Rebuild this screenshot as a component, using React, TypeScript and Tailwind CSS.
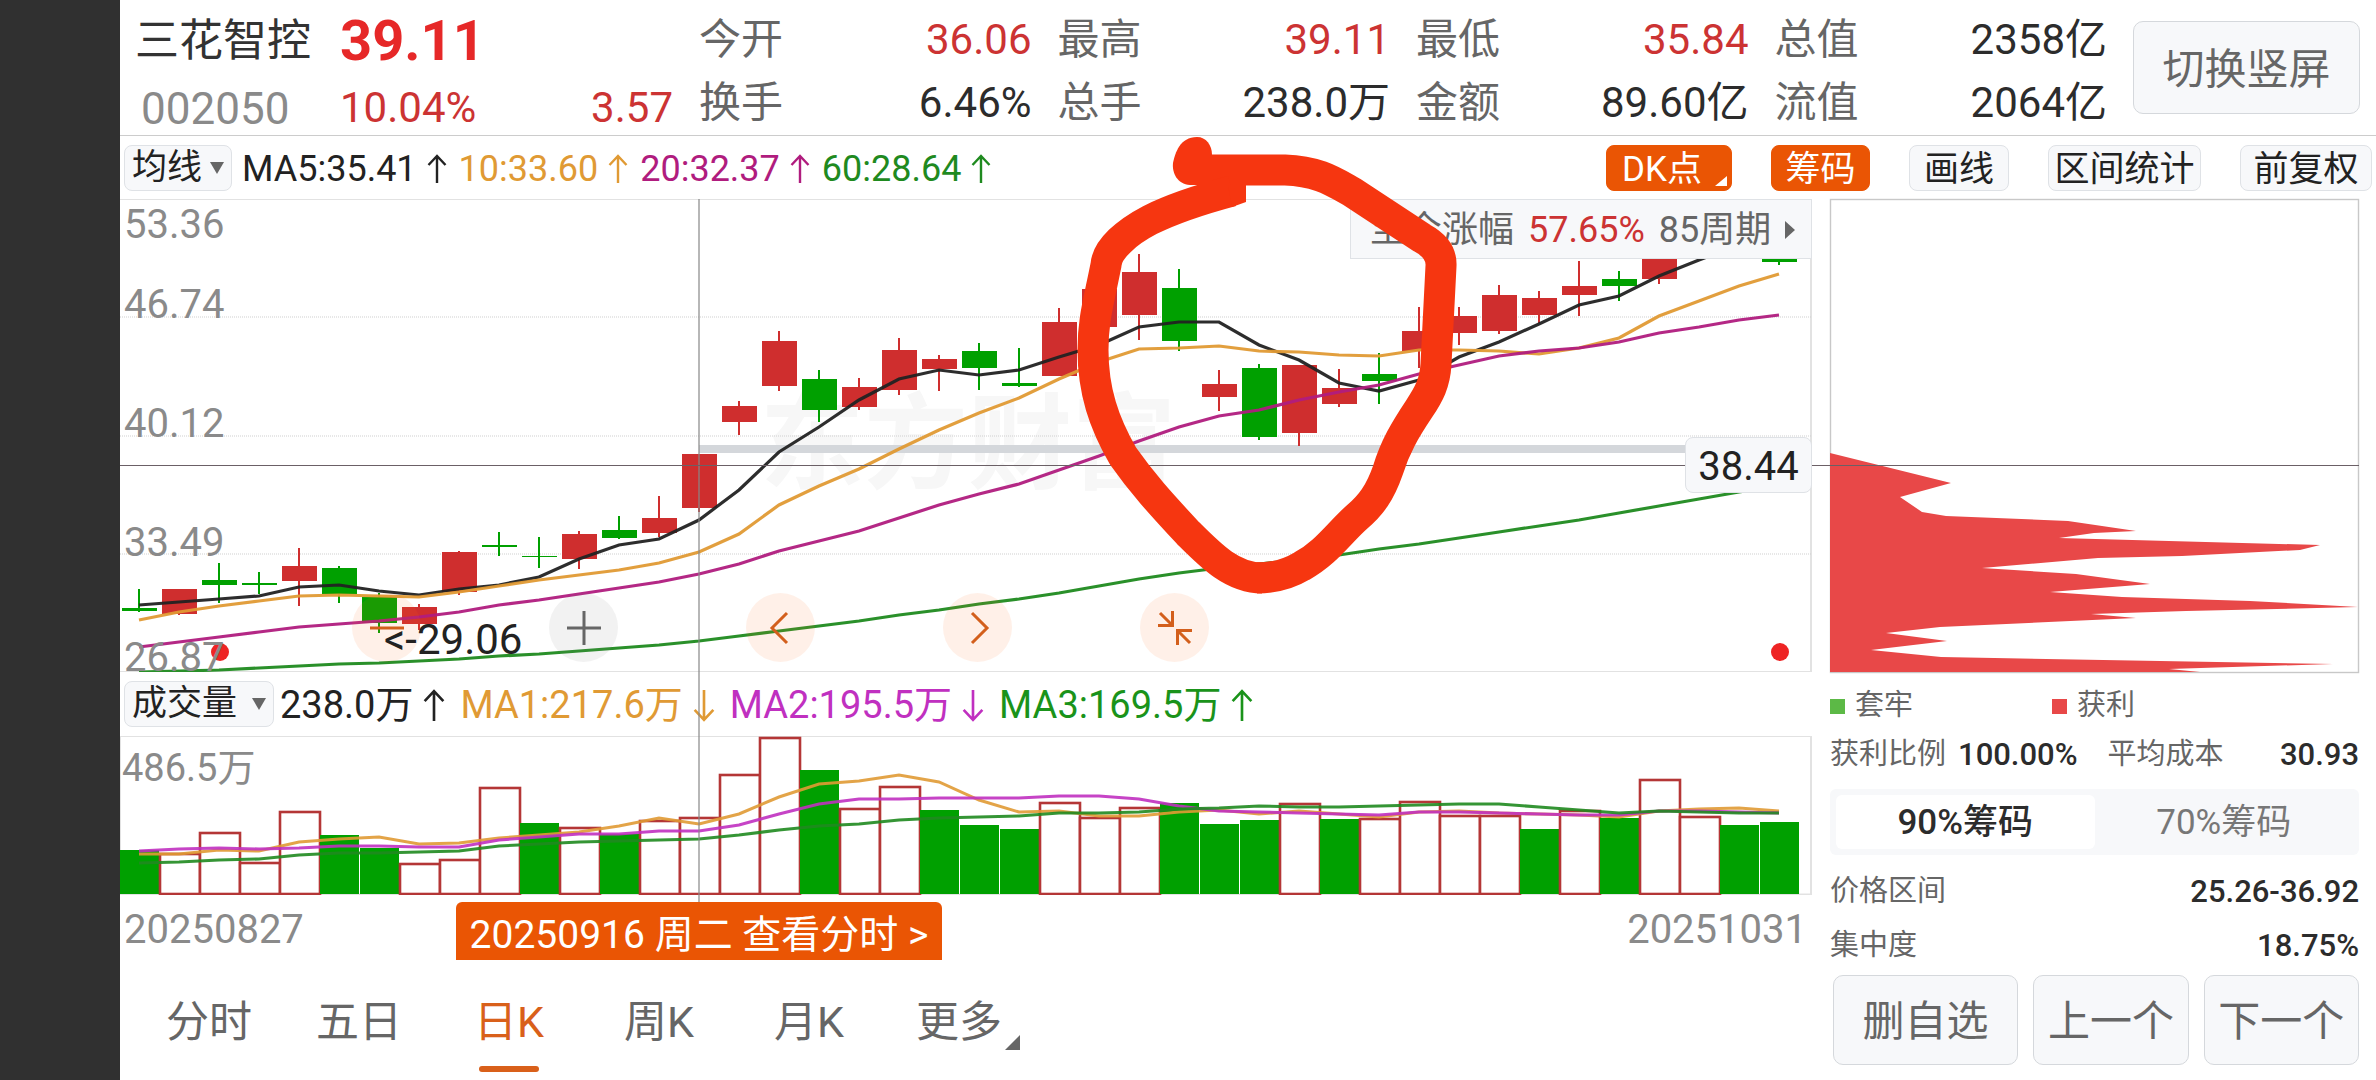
import { useState } from "react";
import type { ReactNode } from "react";
import clsx from "clsx";

const STEP = 40;
const RED = "#cf2e2e";
const GREEN = "#00a000";

type Candle = [up: boolean, top: number, bottom: number, high: number, low: number];

const candles: Candle[] = [
  [false, 409, 412, 390, 413],
  [true, 390, 415, 390, 416],
  [false, 381, 386, 364, 404],
  [false, 384, 386, 373, 395],
  [true, 367, 382, 349, 407],
  [false, 369, 395, 367, 404],
  [false, 398, 424, 394, 434],
  [true, 408, 425, 405, 431],
  [true, 353, 393, 352, 396],
  [false, 346, 348, 333, 357],
  [false, 357, 358, 338, 369],
  [true, 335, 360, 332, 370],
  [false, 331, 339, 317, 340],
  [true, 319, 334, 297, 338],
  [true, 255, 309, 255, 313],
  [true, 207, 223, 202, 236],
  [true, 142, 187, 132, 192],
  [false, 180, 211, 171, 223],
  [true, 188, 208, 179, 211],
  [true, 151, 191, 139, 196],
  [true, 160, 170, 156, 192],
  [false, 152, 169, 144, 191],
  [false, 184, 187, 149, 188],
  [true, 123, 177, 109, 177],
  [true, 90, 128, 90, 128],
  [true, 73, 116, 55, 141],
  [false, 89, 142, 70, 152],
  [true, 185, 198, 171, 212],
  [false, 169, 238, 165, 241],
  [true, 166, 234, 166, 247],
  [true, 189, 205, 170, 208],
  [false, 175, 182, 154, 205],
  [true, 132, 152, 108, 169],
  [true, 117, 134, 108, 146],
  [true, 96, 132, 86, 135],
  [true, 99, 116, 92, 124],
  [true, 87, 96, 62, 117],
  [false, 80, 87, 72, 102],
  [true, 40, 80, 30, 85],
  [true, 20, 40, 15, 45],
  [false, 22, 44, 18, 50],
  [false, 50, 63, 40, 66],
];

const priceLines = [
  {
    color: "#222222",
    values: [
      406, 403, 400, 397, 388, 386, 392, 396, 390, 386, 378, 360, 346, 340, 321, 291, 253, 228,
      201, 180, 171, 176, 171, 158, 146, 128, 123, 123, 146, 161, 184, 192, 181, 158, 143, 125,
      106, 97, 77, 61, 46, 36,
    ],
  },
  {
    color: "#e09a34",
    values: [
      421, 413, 407, 402, 397, 396, 397, 398, 393, 387, 381, 376, 371, 364, 353, 335, 306, 287,
      270, 250, 231, 214, 199, 180, 163, 150, 149, 147, 152, 153, 156, 157, 151, 151, 152, 155,
      149, 139, 117, 102, 87, 75,
    ],
  },
  {
    color: "#b01c7e",
    values: [
      448, 443, 438, 433, 428, 425, 422, 418, 413, 406, 401, 395, 389, 383, 375, 365, 352, 342,
      332, 319, 306, 295, 285, 271, 257, 242, 228, 217, 211, 201, 193, 186, 175, 166, 157, 152,
      149, 143, 134, 128, 121, 116,
    ],
  },
  {
    color: "#1f8a1f",
    values: [
      473, 472, 471, 469, 467, 465, 464, 462, 460, 457, 455, 452, 449, 446, 442, 437, 432, 427,
      422, 416, 411, 405, 400, 394, 387, 380, 374, 369, 365, 361, 356, 350, 345, 339, 333, 327,
      321, 314, 307, 300, 293, 287,
    ],
  },
];

// [rising, top edge of the bar]
const volumes: [boolean, number][] = [
  [false, 114], [true, 117], [true, 96], [true, 126], [true, 75], [false, 99], [false, 112],
  [true, 127], [true, 123], [true, 51], [false, 87], [true, 91], [false, 98], [true, 84],
  [true, 81], [true, 38], [true, 1], [false, 34], [true, 72], [true, 50], [false, 74],
  [false, 89], [false, 93], [true, 66], [true, 81], [true, 71], [false, 67], [false, 88],
  [false, 84], [true, 67], [false, 83], [true, 82], [true, 65], [true, 79], [true, 79],
  [false, 93], [true, 74], [false, 82], [true, 43], [true, 80], [false, 89], [false, 86],
];

const volumeLines = [
  {
    color: "#e09a34",
    values: [
      118, 118, 114, 115, 106, 103, 101, 108, 107, 102, 99, 96, 90, 82, 88, 78, 61, 48, 45, 39,
      46, 64, 76, 75, 80, 80, 76, 74, 78, 75, 78, 81, 76, 75, 77, 78, 79, 81, 75, 73, 72, 75,
    ],
  },
  {
    color: "#c030c0",
    values: [
      115, 113, 112, 113, 112, 110, 110, 111, 111, 104, 101, 98, 98, 95, 95, 89, 78, 68, 63, 63,
      62, 62, 62, 60, 60, 63, 70, 75, 76, 77, 78, 79, 76, 76, 77, 78, 79, 79, 75, 75, 76, 77,
    ],
  },
  {
    color: "#1f8a1f",
    values: [
      127, 126, 124, 123, 119, 117, 117, 116, 115, 110, 108, 106, 105, 104, 103, 99, 94, 90, 88,
      84, 82, 81, 80, 77, 77, 76, 73, 72, 70, 71, 71, 70, 69, 68, 68, 71, 74, 77, 75, 76, 77, 77,
    ],
  },
];

const chips =
  "0,254 121,284 70,298 92,313 116,317 238,322 306,332 264,334 229,339 490,346 470,351 352,357 268,359 152,369 246,375 320,385 220,393 292,398 420,402 528,408 356,412 261,415 306,419 110,428 56,434 117,442 41,451 111,458 503,465 339,470 370,473 0,473";

const stats = [
  [["今开", "36.06", true], ["换手", "6.46%", false]],
  [["最高", "39.11", true], ["总手", "238.0万", false]],
  [["最低", "35.84", true], ["金额", "89.60亿", false]],
  [["总值", "2358亿", false], ["流值", "2064亿", false]],
] as const;

const periods = ["分时", "五日", "日K", "周K", "月K", "更多"];

function points(values: number[], offset: number) {
  return values.map((y, i) => `${offset + i * STEP},${y}`).join(" ");
}

function Arrow({ down = false, large = false }: { down?: boolean; large?: boolean }) {
  return (
    <svg
      viewBox="0 0 20 30"
      className={clsx(large ? "h-[33px] w-[22px]" : "h-[30px] w-[20px]", down && "rotate-180")}
      fill="none"
      stroke="currentColor"
      strokeWidth="2.4"
      aria-hidden="true"
    >
      <path d="M10 29V2M1.500 11 10 2l8.500 9" />
    </svg>
  );
}

function Reading({
  className,
  children,
  down,
  large,
}: {
  className: string;
  children: ReactNode;
  down?: boolean;
  large?: boolean;
}) {
  return (
    <span className={clsx("flex items-center gap-[10px] whitespace-nowrap", className)}>
      {children}
      <Arrow down={down} large={large} />
    </span>
  );
}

function Picker({ label, options, className }: { label: string; options: string[]; className: string }) {
  return (
    <span className={clsx("relative flex h-[46px] shrink-0", className)}>
      <select
        aria-label={label}
        className="w-full appearance-none rounded-lg border border-[#dfe2e6] bg-[#f7f8fa] pl-[7px] text-[35px] leading-[44px] text-[#222]"
      >
        {options.map((option) => (
          <option key={option}>{option}</option>
        ))}
      </select>
      <svg
        viewBox="0 0 14 12"
        className="pointer-events-none absolute top-[17px] right-2 h-3 w-3.5"
        fill="#666"
        aria-hidden="true"
      >
        <path d="M0 0h14L7 12z" />
      </svg>
    </span>
  );
}

function ToolButton({
  active = false,
  className,
  children,
}: {
  active?: boolean;
  className: string;
  children: ReactNode;
}) {
  return (
    <button
      type="button"
      className={clsx(
        "relative h-[46px] shrink-0 rounded-lg border pt-0.5 text-[35px] leading-[44px]",
        active
          ? "border-[#ea5504] bg-[#ea5504] text-white"
          : "border-[#dfe2e6] bg-[#f7f8fa] text-[#222]",
        className,
      )}
    >
      {children}
    </button>
  );
}

function Header() {
  return (
    <header className="flex h-[136px] border-b border-[#ccc]">
      <div className="w-[204px] shrink-0 pt-2 pl-[15px]">
        <h1 className="text-[44px] leading-[66px] text-[#333]">三花智控</h1>
        <p className="pl-1.5 text-[44px] leading-[70px] text-[#8a8a8a]">002050</p>
      </div>
      <div className="w-[375px] shrink-0 pt-2 pr-[26px] pl-4">
        <p className="text-[56px] leading-[66px] font-bold text-[#e62828]">39.11</p>
        <p className="flex justify-between text-[42px] leading-[68px] text-[#cc3333]">
          <span>10.04%</span>
          <span>3.57</span>
        </p>
      </div>
      <div className="grid flex-1 grid-cols-4 pt-2">
        {stats.map((column) => (
          <dl key={column[0][0]} className="pr-[26px] text-[42px] leading-[63px]">
            {column.map(([name, value, rising]) => (
              <div key={name} className="flex justify-between whitespace-nowrap">
                <dt className="text-[#666]">{name}</dt>
                <dd className={rising ? "text-[#cc3333]" : "text-[#2c2c2c]"}>{value}</dd>
              </div>
            ))}
          </dl>
        ))}
      </div>
      <button
        type="button"
        className="mt-[21px] mr-4 h-[93px] w-[227px] shrink-0 rounded-[10px] border border-[#d5d8dc] bg-[#f7f8fa] pt-1 text-[42px] text-[#666]"
      >
        切换竖屏
      </button>
    </header>
  );
}

function Toolbar() {
  return (
    <div className="flex h-[63px] items-center px-1">
      <Picker label="指标" options={["均线", "BOLL"]} className="w-[108px]" />
      <div className="flex gap-3 pt-0.5 pl-2.5 text-[36px]">
        <Reading className="text-[#222]">MA5:35.41</Reading>
        <Reading className="text-[#e09a34]">10:33.60</Reading>
        <Reading className="text-[#b01c7e]">20:32.37</Reading>
        <Reading className="text-[#1f8a1f]">60:28.64</Reading>
      </div>
      <div className="ml-auto flex gap-[39px]">
        <ToolButton active className="w-[126px] pr-[14px]">
          DK点
          <svg
            viewBox="0 0 12 10"
            className="absolute right-1 bottom-1 h-2.5 w-3"
            fill="#fff"
            aria-hidden="true"
          >
            <path d="M12 0v10H0z" />
          </svg>
        </ToolButton>
        <ToolButton active className="w-[99px]">筹码</ToolButton>
        <ToolButton className="w-[100px]">画线</ToolButton>
        <ToolButton className="w-[153px]">区间统计</ToolButton>
        <ToolButton className="w-[132px]">前复权</ToolButton>
      </div>
    </div>
  );
}

function RoundButton({ label, muted = false, children }: { label: string; muted?: boolean; children: ReactNode }) {
  return (
    <button
      type="button"
      aria-label={label}
      className={clsx(
        "flex size-[69px] items-center justify-center rounded-full",
        muted ? "bg-[#808080]/10 text-[#666]" : "bg-[#ff6a1a]/10 text-[#d35f1c]",
      )}
    >
      <svg viewBox="0 0 34 34" className="size-[34px]" fill="none" stroke="currentColor" strokeWidth="3">
        {children}
      </svg>
    </button>
  );
}

function PriceChart() {
  return (
    <section className="relative h-[473px]">
      <p
        aria-hidden="true"
        className="absolute top-[185px] left-[640px] font-[Noto_Sans_CJK_SC] text-[104px] leading-[104px] font-bold text-[#f7f7f7]"
      >
        东方财富
      </p>
      <svg
        viewBox="0 0 1692 473"
        preserveAspectRatio="none"
        className="absolute inset-0 size-full"
        role="img"
        aria-label="日K线"
      >
        <path d="M0 0H1691V473H0" fill="none" stroke="#e2e2e2" strokeWidth="2" />
        {[118, 237, 355].map((y) => (
          <path key={y} d={`M0 ${y}H1691`} stroke="#cfcfcf" strokeDasharray="1 1" />
        ))}
        <rect x="579" y="246" width="1000" height="8" fill="#d4d7db" />
        {candles.map(([up, top, bottom, high, low], i) => {
          const x = 19 + i * STEP;
          return (
            <g key={i} fill={up ? RED : GREEN}>
              <rect x={x - 1} y={high} width="2" height={low - high} />
              <rect x={x - 17} y={top} width="35" height={bottom - top} />
            </g>
          );
        })}
        {priceLines.map(({ color, values }) => (
          <polyline
            key={color}
            points={points(values, 19)}
            fill="none"
            stroke={color}
            strokeWidth="3.2"
            strokeOpacity="0.95"
          />
        ))}
        <circle cx="100" cy="453" r="9" fill="#ee2424" />
        <circle cx="1660" cy="453" r="9" fill="#ee2424" />
      </svg>

      <ul className="absolute inset-y-0 left-1 text-[40px] leading-[40px] text-[#8a8a8a]">
        <li className="absolute top-[6px]">53.36</li>
        <li className="absolute top-[86px]">46.74</li>
        <li className="absolute top-[205px]">40.12</li>
        <li className="absolute top-[324px]">33.49</li>
        <li className="absolute top-[439px]">26.87</li>
      </ul>

      <div className="absolute top-[394px] left-[232px] flex gap-32">
        <RoundButton label="缩小">
          <path d="M0 17h34" />
        </RoundButton>
        <RoundButton label="放大" muted>
          <path d="M0 17h34M17 0v34" />
        </RoundButton>
        <RoundButton label="上一根">
          <path d="M23 2 8 17l15 15" />
        </RoundButton>
        <RoundButton label="下一根">
          <path d="M11 2l15 15-15 15" />
        </RoundButton>
        <RoundButton label="收起">
          <path d="M2 2l12 12M0 14.500h14.500V0M32 32 20 20M34 19.500H19.500V34" />
        </RoundButton>
      </div>
      <p className="absolute top-[421px] left-[264px] text-[42px] leading-[40px] text-[#222]">
        &lt;-29.06
      </p>

      <button
        type="button"
        className="absolute top-0 right-0 flex h-[60px] w-[462px] items-center gap-[14px] border border-[#dfe2e6] bg-[#f7f8fa] pt-0.5 pl-[19px] text-[36px] whitespace-nowrap text-[#666]"
      >
        至今涨幅
        <span className="text-[#cc3333]">57.65%</span>
        85周期
        <svg viewBox="0 0 10 18" className="h-[18px] w-2.5" fill="#666" aria-hidden="true">
          <path d="M0 0l10 9-10 9z" />
        </svg>
      </button>

      {/* crosshair, then the hand-drawn mark on top of everything */}
      <svg
        viewBox="0 0 1692 473"
        preserveAspectRatio="none"
        className="pointer-events-none absolute inset-0 z-10 size-full overflow-visible"
        aria-hidden="true"
      >
        <path d="M579 0V703" stroke="#888" strokeWidth="1.500" strokeOpacity="0.8" />
        <path d="M0 266.500H1692" stroke="#6b6066" strokeWidth="1.200" />
        <g fill="none" stroke="#f63610" strokeWidth="31" strokeLinejoin="round">
          <path d="M1078-29H1165C1198-28 1214-17 1232-7L1302 39Q1322 50 1321 67L1316 165C1315 184 1309 195 1299 210C1285 231 1275 248 1268 271C1260 294 1251 306 1237 318C1219 334 1206 354 1182 367C1167 376 1152 379 1137 379" />
          <path d="M1112-8C1086-1 1056 8 1030 21C1007 33 987 50 986 66C978 106 973 121 973 151C973 192 984 224 1003 257C1022 284 1040 304 1068 334C1090 356 1112 379 1142 379" />
        </g>
        <path d="M1108-14H1126V3L1112 8Z" fill="#f63610" />
        <path
          d="M1077-62C1086-62 1092-54 1092-44V-14H1070C1057-15 1052-26 1053-36C1055-46 1060-62 1077-62Z"
          fill="#f63610"
        />
      </svg>

      <output className="absolute top-[238px] right-0 z-10 h-[56px] w-[127px] rounded-lg border border-[#dfe2e6] bg-[#f7f8fa] pt-0.5 text-center text-[40px] leading-[54px] text-[#222]">
        38.44
      </output>
    </section>
  );
}

function VolumeChart() {
  return (
    <section>
      <div className="flex h-[64px] items-center pl-1 text-[38px]">
        <Picker label="副图指标" options={["成交量", "MACD"]} className="w-[150px]" />
        <div className="flex gap-[15px] pt-0.5 pl-1.5">
          <Reading className="text-[#222]" large>238.0万</Reading>
          <Reading className="text-[#e09a34]" down large>MA1:217.6万</Reading>
          <Reading className="text-[#c030c0]" down large>MA2:195.5万</Reading>
          <Reading className="text-[#1a931a]" large>MA3:169.5万</Reading>
        </div>
      </div>
      <div className="relative h-[159px]">
        <svg
          viewBox="0 0 1692 159"
          preserveAspectRatio="none"
          className="absolute inset-0 size-full"
          role="img"
          aria-label="成交量"
        >
          <rect x="0" y="0" width="1691" height="158.500" fill="none" stroke="#e2e2e2" strokeWidth="2" />
          {volumes.map(([up, top], i) =>
            up ? (
              <rect
                key={i}
                x={i * STEP}
                y={top + 1}
                width="40"
                height={157 - top}
                fill="#fff"
                stroke="#b43636"
                strokeWidth="2.600"
              />
            ) : (
              <rect key={i} x={i * STEP} y={top} width="39" height={158 - top} fill={GREEN} />
            ),
          )}
          {volumeLines.map(({ color, values }) => (
            <polyline
              key={color}
              points={points(values, 19)}
              fill="none"
              stroke={color}
              strokeWidth="3"
              strokeOpacity="0.9"
            />
          ))}
        </svg>
        <p className="absolute top-[13px] left-0.5 text-[38px] leading-[38px] text-[#8a8a8a]">
          486.5万
        </p>
      </div>
      <div className="relative flex h-[65px] items-center justify-between pt-1 pr-[5px] pl-1 text-[40px] text-[#8a8a8a]">
        <time dateTime="2025-08-27">20250827</time>
        <button
          type="button"
          className="absolute bottom-0 left-[336px] h-[58px] w-[486px] rounded-t-md bg-[#ea5504] pt-1 text-[39px] whitespace-nowrap text-white"
        >
          20250916 周二 查看分时 &gt;
        </button>
        <time dateTime="2025-10-31">20251031</time>
      </div>
    </section>
  );
}

function PeriodTabs() {
  const [period, setPeriod] = useState("日K");

  return (
    <nav className="flex h-[120px] pl-[14px]" role="tablist">
      {periods.map((name) => (
        <button
          key={name}
          type="button"
          role="tab"
          aria-selected={name === period}
          onClick={() => setPeriod(name)}
          className={clsx(
            "relative w-[150px] pt-1 text-[43px] leading-[116px]",
            name === period ? "text-[#d9601a]" : "text-[#666]",
          )}
        >
          {name}
          {name === period ? (
            <span className="absolute bottom-2 left-[45px] h-1.5 w-[60px] rounded-full bg-[#d9601a]" />
          ) : null}
          {name === "更多" ? (
            <svg
              viewBox="0 0 15 15"
              className="absolute right-[14px] bottom-[30px] size-[15px]"
              fill="#666"
              aria-hidden="true"
            >
              <path d="M15 0v15H0z" />
            </svg>
          ) : null}
        </button>
      ))}
    </nav>
  );
}

function ChipPanel() {
  const [share, setShare] = useState("90%筹码");

  return (
    <aside className="w-[529px] shrink-0 text-[29px] text-[#666]">
      <svg
        viewBox="0 0 529 473"
        preserveAspectRatio="none"
        className="h-[473px] w-full overflow-visible"
        role="img"
        aria-label="筹码分布"
      >
        <rect x="0.500" y="0.500" width="528" height="473" fill="none" stroke="#c8c8c8" strokeWidth="1.400" />
        <polygon points={chips} fill="#e84848" />
        <path d="M-18 266.500H529" stroke="#6b6066" strokeWidth="1.200" />
      </svg>
      <div className="flex h-[58px] items-center pt-2.5">
        <span className="flex w-[222px] items-center gap-2.5">
          <i className="size-[15px] bg-[#5cb946]" />
          套牢
        </span>
        <span className="flex items-center gap-2.5">
          <i className="size-[15px] bg-[#e84848]" />
          获利
        </span>
      </div>
      <dl className="flex h-[46px] items-center pt-1 whitespace-nowrap">
        <dt>获利比例</dt>
        <dd className="pl-3 text-[31px] font-medium text-[#2c2c2c]">100.00%</dd>
        <dt className="pl-[30px]">平均成本</dt>
        <dd className="ml-auto text-[31px] font-medium text-[#2c2c2c]">30.93</dd>
      </dl>
      <div className="mt-[13px] grid h-[66px] grid-cols-2 rounded-md bg-[#f7f8fa] p-1.5 text-[35px]">
        {["90%筹码", "70%筹码"].map((name) => (
          <button
            key={name}
            type="button"
            aria-pressed={name === share}
            onClick={() => setShare(name)}
            className={clsx(
              "rounded-md pt-0.5 leading-[52px]",
              name === share ? "bg-white font-medium text-[#2c2c2c]" : "text-[#777]",
            )}
          >
            {name}
          </button>
        ))}
      </div>
      <dl className="pt-2.5">
        {[
          ["价格区间", "25.26-36.92"],
          ["集中度", "18.75%"],
        ].map(([name, value]) => (
          <div key={name} className="flex h-[54px] items-center justify-between">
            <dt>{name}</dt>
            <dd className="text-[31px] font-medium text-[#2c2c2c]">{value}</dd>
          </div>
        ))}
      </dl>
      <div className="mt-0.5 grid h-[90px] grid-cols-[186fr_156fr_156fr] gap-[15px] pl-[3px] text-[42px]">
        {["删自选", "上一个", "下一个"].map((name) => (
          <button
            key={name}
            type="button"
            className="rounded-[10px] border border-[#d5d8dc] bg-[#f7f8fa] pt-1 leading-[84px] whitespace-nowrap"
          >
            {name}
          </button>
        ))}
      </div>
    </aside>
  );
}

export default function App() {
  return (
    <div className="flex min-h-screen bg-[#303030] pl-[120px] font-[Roboto,'Noto_Sans_CJK_SC',sans-serif]">
      <main className="min-w-0 flex-1 bg-white">
        <Header />
        <Toolbar />
        <div className="flex gap-[18px] pr-[17px]">
          <div className="min-w-0 flex-1">
            <PriceChart />
            <VolumeChart />
            <PeriodTabs />
          </div>
          <ChipPanel />
        </div>
      </main>
    </div>
  );
}
